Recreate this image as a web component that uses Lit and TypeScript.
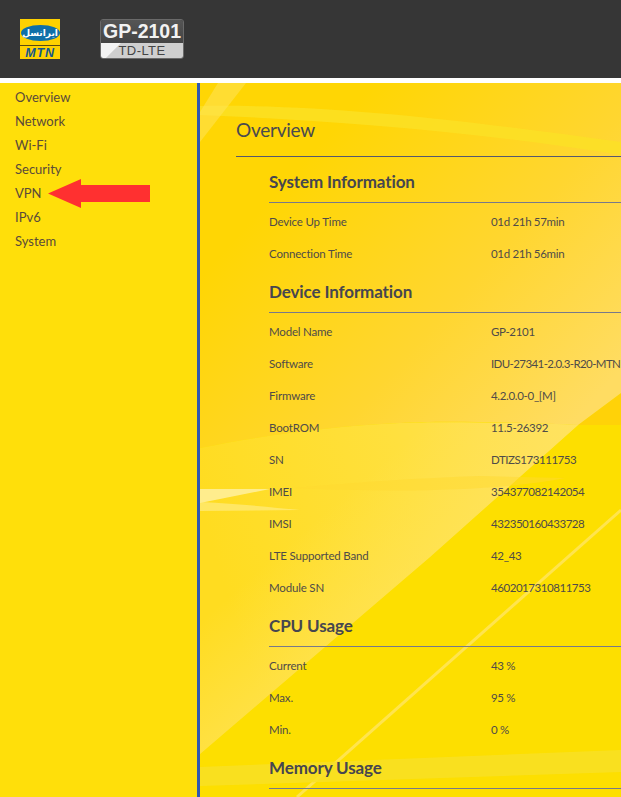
import { LitElement, html, css, svg } from "lit";
import { customElement } from "lit/decorators.js";

type Row = [string, string];
const sections: { title: string; rows: Row[] }[] = [
  { title: "System Information", rows: [["Device Up Time", "01d 21h 57min"], ["Connection Time", "01d 21h 56min"]] },
  {
    title: "Device Information",
    rows: [
      ["Model Name", "GP-2101"],
      ["Software", "IDU-27341-2.0.3-R20-MTN"],
      ["Firmware", "4.2.0.0-0_[M]"],
      ["BootROM", "11.5-26392"],
      ["SN", "DTIZS173111753"],
      ["IMEI", "354377082142054"],
      ["IMSI", "432350160433728"],
      ["LTE Supported Band", "42_43"],
      ["Module SN", "4602017310811753"],
    ],
  },
  { title: "CPU Usage", rows: [["Current", "43 %"], ["Max.", "95 %"], ["Min.", "0 %"]] },
  { title: "Memory Usage", rows: [] },
];
const nav = ["Overview", "Network", "Wi-Fi", "Security", "VPN", "IPv6", "System"];

const wallpaper = svg`
<svg class="wall" viewBox="200 83 421 714" preserveAspectRatio="none" aria-hidden="true">
  <defs>
    <linearGradient id="g1" gradientUnits="userSpaceOnUse" x1="340" y1="120" x2="621" y2="370">
      <stop offset="0" stop-color="#FFD604"/><stop offset=".55" stop-color="#FFD630"/><stop offset="1" stop-color="#FFDC62"/>
    </linearGradient>
    <linearGradient id="g2" gradientUnits="userSpaceOnUse" x1="210" y1="540" x2="570" y2="430">
      <stop offset="0" stop-color="#FFDC20"/><stop offset=".55" stop-color="#FFE03E"/><stop offset="1" stop-color="#FFE062"/>
    </linearGradient>
    <linearGradient id="g3" gradientUnits="userSpaceOnUse" x1="270" y1="560" x2="340" y2="640">
      <stop offset="0" stop-color="#FFE45C" stop-opacity="0"/><stop offset="1" stop-color="#FFE45C" stop-opacity=".6"/>
    </linearGradient>
  </defs>
  <rect x="200" y="83" width="421" height="714" fill="#FDDF00"/>
  <path d="M621 393V425H578Z" fill="#FFD208"/>
  <path d="M200 83H621V393L578 425C540 423 440 420 400 423C330 426 260 436 200 448Z" fill="url(#g1)"/>
  <path d="M200 448C260 436 330 426 400 423C440 421 540 423 578 425L430 557L200 754Z" fill="url(#g2)"/>
  <path d="M200 448C260 436 330 426 400 423C440 421 540 423 578 425L430 557L200 754Z" fill="url(#g3)"/>
  <path d="M295 488C360 482 420 478 480 476L565 478C500 491 400 493 295 488Z" fill="#FFD930" opacity=".5"/>
  <path d="M200 489H270L200 503Z" fill="#FFF0A0" opacity=".85"/>
  <path d="M200 502C240 504 270 507 300 510L200 511Z" fill="#FFEE90" opacity=".6"/>
  <path d="M200 106C320 104 450 118 621 142V155C480 132 330 120 200 115Z" fill="#FBE125" opacity=".8"/>
  <path d="M218 83H246L200 142V112Z" fill="#FFE45A" opacity=".55"/>
  <path d="M297 797L621 510" stroke="#FFE44E" stroke-width="3" fill="none"/>
  <path d="M200 767L621 750V772L200 786Z" fill="#F8E024" opacity=".85"/>
</svg>`;

@customElement("app-root")
export class AppRoot extends LitElement {
  static styles = css`
    :host {
      display: block;
      width: 621px;
      height: 797px;
      overflow: hidden;
      background: #fff;
      font-family: Lato, "Liberation Sans", sans-serif;
      color: #4b4a4c;
    }
    .header {
      height: 78px;
      background: #363636;
      display: flex;
      align-items: center;
      gap: 40px;
      padding-left: 20px;
      box-sizing: border-box;
    }
    .logo {
      width: 40px;
      height: 40px;
      background: #fed100;
      display: flex;
      flex-direction: column;
      align-items: center;
      box-sizing: border-box;
    }
    .oval {
      margin-top: 6px;
      width: 39px;
      height: 16px;
      border-radius: 50%;
      background: #0f6fa8;
      color: #fff;
      font: bold 9px/16px "DejaVu Sans", sans-serif;
      text-align: center;
      white-space: nowrap;
    }
    .mtn {
      margin-top: 4px;
      width: 100%;
      border-top: 1px solid #5c4a10;
      color: #14578c;
      font: italic bold 12.5px/12px "Liberation Sans", sans-serif;
      padding-top: 1px;
      text-align: center;
      letter-spacing: 0.8px;
    }
    .badge {
      width: 84px;
      height: 40px;
      border-radius: 3px;
      display: flex;
      flex-direction: column;
      border: 1px solid #6a6a6a;
      box-sizing: border-box;
    }
    .badge-top {
      height: 23px;
      background: linear-gradient(#555, #444);
      color: #f2f2f2;
      font: bold 19.5px/23px "Liberation Sans", sans-serif;
      text-align: center;
      white-space: nowrap;
      border-radius: 2px 2px 0 0;
    }
    .badge-bottom {
      flex: 1;
      background: linear-gradient(135deg, #f4f4f4 0 20%, #cfcfcf 21%);
      color: #444;
      font: 13px/15px "Liberation Sans", sans-serif;
      text-align: center;
      letter-spacing: 0.4px;
      border-radius: 0 0 2px 2px;
    }
    .body {
      margin-top: 5px;
      height: 714px;
      display: flex;
    }
    .side {
      position: relative;
      width: 197px;
      flex: none;
      background: #ffdf0a;
      border-right: 3px solid #3058ae;
      padding-top: 2px;
    }
    .side a {
      display: block;
      height: 24px;
      padding-left: 15px;
      font-size: 13px;
      line-height: 24px;
      color: #5a4a3a;
    }
    .arrow {
      position: absolute;
      left: 48px;
      top: 96px;
      width: 102px;
      height: 29px;
    }
    .main {
      position: relative;
      flex: 1;
      min-width: 0;
      overflow: hidden;
      padding-left: 36px;
    }
    .wall {
      position: absolute;
      inset: 0;
      width: 100%;
      height: 100%;
    }
    .content {
      position: relative;
      white-space: nowrap;
    }
    h1 {
      margin: 0;
      height: 74px;
      box-sizing: border-box;
      padding-top: 33px;
      font-size: 19px;
      letter-spacing: -0.25px;
      line-height: 28px;
      font-weight: 400;
      color: #4a4a4f;
      border-bottom: 1px solid #56586e;
    }
    .section {
      margin-left: 33px;
    }
    h2 {
      margin: 0;
      height: 46px;
      box-sizing: border-box;
      padding-top: 13px;
      font-size: 17px;
      letter-spacing: -0.12px;
      line-height: 24px;
      font-weight: 700;
      color: #46464f;
      border-bottom: 1px solid #77798a;
    }
    .row {
      display: flex;
      height: 32px;
      align-items: center;
      font-size: 11.5px;
      color: #4f4b48;
    }
    .rows .row:first-child {
      margin-top: 2px;
    }
    .label {
      width: 222px;
      flex: none;
      letter-spacing: -0.18px;
    }
    .value {
      letter-spacing: -0.32px;
    }
    .value.long {
      letter-spacing: -0.6px;
    }
    .value.num {
      letter-spacing: -0.45px;
    }
    .section + .section h2 {
      height: 44px;
      padding-top: 11px;
    }
  `;

  private valueClass(v: string) {
    if (/^[0-9A-Z]+$/.test(v)) return "num";
    return v.length > 20 ? "long" : "";
  }

  render() {
    return html`
      <div class="header">
        <div class="logo">
          <div class="oval" lang="fa" dir="rtl">ایرانسل</div>
          <div class="mtn">MTN</div>
        </div>
        <div class="badge">
          <div class="badge-top">GP-2101</div>
          <div class="badge-bottom">TD-LTE</div>
        </div>
      </div>
      <div class="body">
        <nav class="side">
          ${nav.map((n) => html`<a>${n}</a>`)}
          <svg class="arrow" viewBox="0 0 102 29" aria-hidden="true">
            <path d="M0 14.5L33 0V6H102V23H33V29Z" fill="#ff3030"/>
          </svg>
        </nav>
        <main class="main">
          ${wallpaper}
          <div class="content">
            <h1>Overview</h1>
            ${sections.map(
              (s) => html`
                <section class="section">
                  <h2>${s.title}</h2>
                  <div class="rows">
                    ${s.rows.map(
                      ([k, v]) =>
                        html`<div class="row"><span class="label">${k}</span><span class="value ${this.valueClass(v)}">${v}</span></div>`
                    )}
                  </div>
                </section>
              `
            )}
          </div>
        </main>
      </div>
    `;
  }
}
